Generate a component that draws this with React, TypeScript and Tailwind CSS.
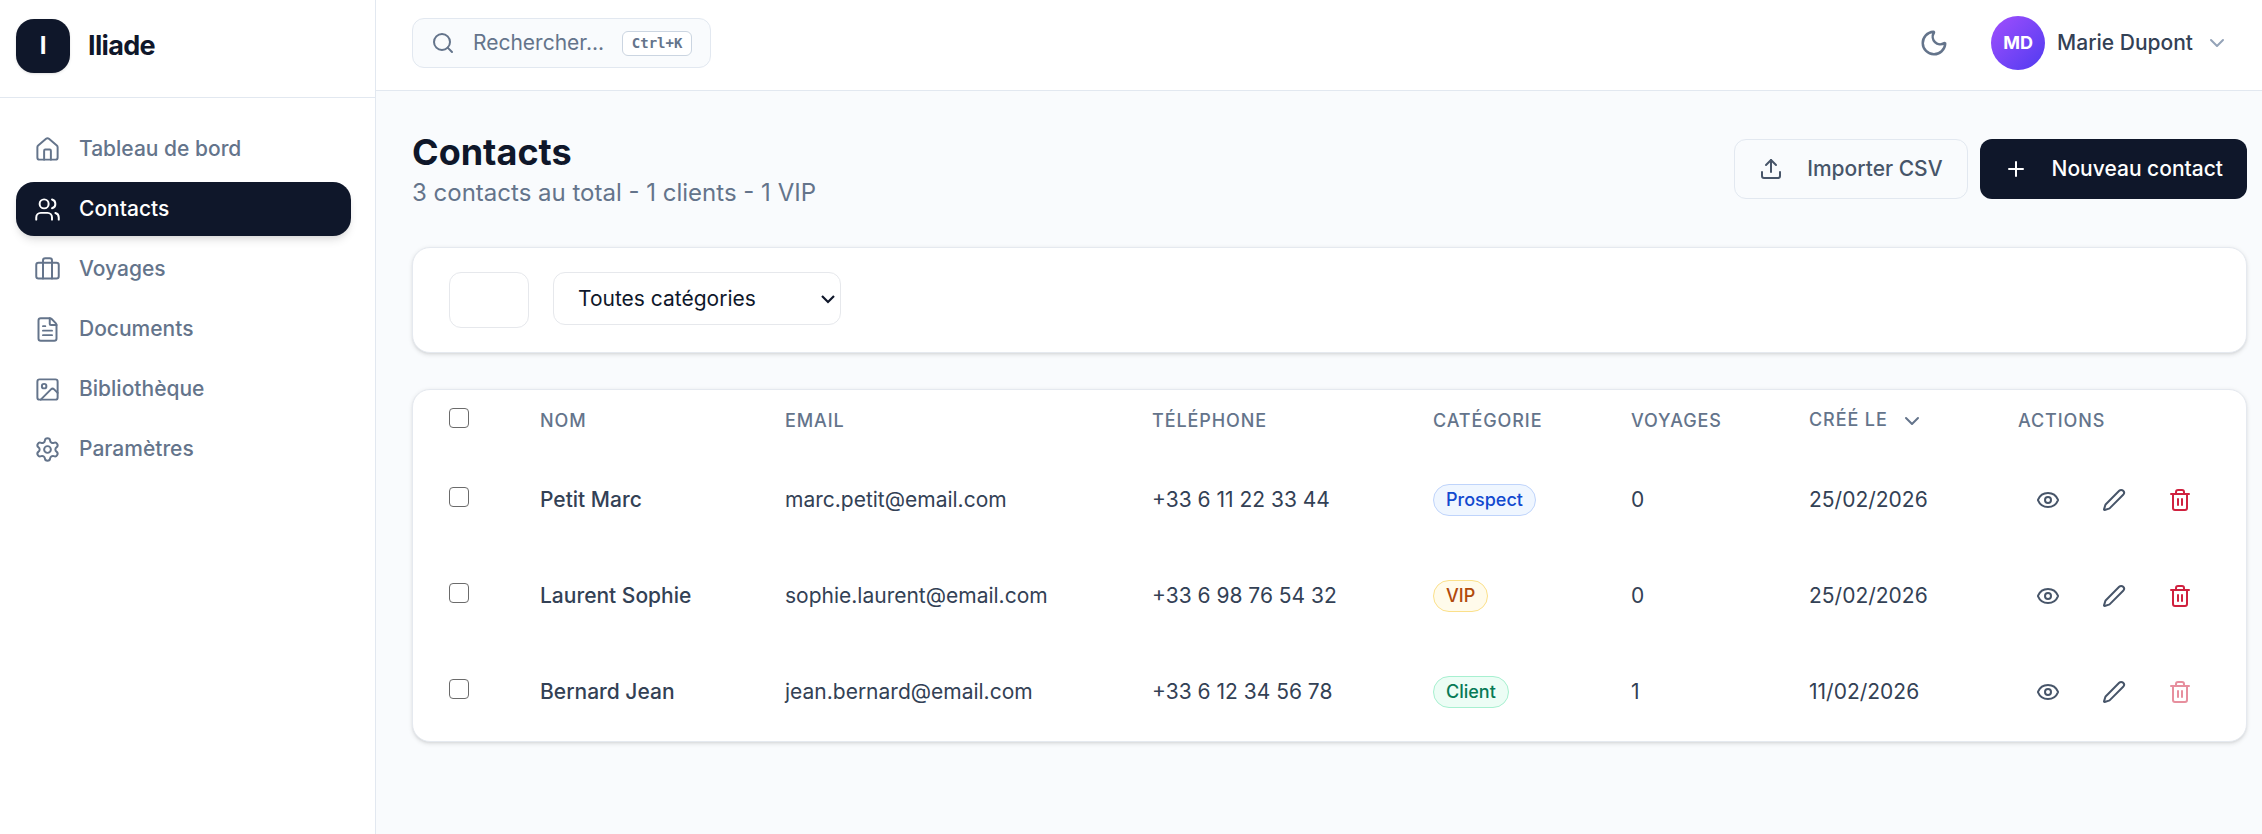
import {
  ChevronDown,
  Eye,
  FileText,
  House,
  Image,
  Moon,
  Pen,
  Plus,
  Search,
  Settings,
  Trash2,
  Upload,
  Users,
} from "lucide-react";
import type { LucideIcon } from "lucide-react";
import clsx from "clsx";

type NavItem = { label: string; icon: LucideIcon | typeof SuitcaseIcon; active?: boolean };

type Contact = {
  name: string;
  email: string;
  phone: string;
  category: "Prospect" | "VIP" | "Client";
  trips: number;
  created: string;
  locked?: boolean;
};

const SuitcaseIcon = ({ className }: { className?: string; strokeWidth?: number }) => (
  <svg className={className} viewBox="0 0 24 24" fill="none" stroke="currentColor" strokeWidth={1.75} strokeLinecap="round" strokeLinejoin="round">
    <rect x="2" y="6" width="20" height="14" rx="2" />
    <path d="M16 20V4a2 2 0 0 0-2-2h-4a2 2 0 0 0-2 2v16" />
  </svg>
);

const navItems: NavItem[] = [
  { label: "Tableau de bord", icon: House },
  { label: "Contacts", icon: Users, active: true },
  { label: "Voyages", icon: SuitcaseIcon },
  { label: "Documents", icon: FileText },
  { label: "Bibliothèque", icon: Image },
  { label: "Paramètres", icon: Settings },
];

const contacts: Contact[] = [
  { name: "Petit Marc", email: "marc.petit@email.com", phone: "+33 6 11 22 33 44", category: "Prospect", trips: 0, created: "25/02/2026" },
  { name: "Laurent Sophie", email: "sophie.laurent@email.com", phone: "+33 6 98 76 54 32", category: "VIP", trips: 0, created: "25/02/2026" },
  { name: "Bernard Jean", email: "jean.bernard@email.com", phone: "+33 6 12 34 56 78", category: "Client", trips: 1, created: "11/02/2026", locked: true },
];

const badgeStyles = {
  Prospect: "bg-[#eff6ff] border-[#bfd4fb] text-[#1249cf]",
  VIP: "bg-[#fffbeb] border-[#fbe08a] text-[#b14a0b]",
  Client: "bg-[#ecfdf5] border-[#a7f0d0] text-[#077a56]",
};

const columns = "grid grid-cols-[91px_245px_367px_281px_198px_178px_209px_1fr] items-center *:pl-9";

const cardShadow = "shadow-[0_1.5px_4.5px_rgba(0,0,0,0.1),0_1.5px_3px_-1.5px_rgba(0,0,0,0.1)]";

const Checkbox = () => (
  <input type="checkbox" className="block size-5 appearance-none rounded-[4px] border border-[#6b6b6b] bg-white" />
);

const Sidebar = () => (
  <aside className="flex w-94 shrink-0 flex-col border-r border-[#e2e8f0] bg-white">
    <div className="flex h-[98px] items-center gap-[18px] border-b border-[#e2e8f0] px-4 pb-[5px]">
      <div className="flex size-[54px] items-center justify-center rounded-[18px] bg-[#0f172a] text-2xl font-bold text-white shadow-sm">I</div>
      <span className="text-[27px] font-bold tracking-[-0.025em] text-[#0f172a]">Iliade</span>
    </div>
    <nav className="flex flex-col gap-1.5 pt-6 pr-6 pl-4">
      {navItems.map(({ label, icon: Icon, active }) => (
        <a
          key={label}
          className={clsx(
            "flex h-[54px] items-center gap-[18px] rounded-[18px] pl-[18px] text-[21px] font-medium",
            active
              ? "bg-[#0f172a] text-white shadow-[0_6px_9px_-1.5px_rgba(0,0,0,0.1),0_3px_6px_-3px_rgba(0,0,0,0.1)]"
              : "text-[#64748b]",
          )}
        >
          <Icon className="size-[27px]" strokeWidth={1.75} />
          <span>{label}</span>
        </a>
      ))}
    </nav>
  </aside>
);

const Header = () => (
  <header className="flex h-[91px] shrink-0 items-center justify-between border-b border-[#e2e8f0] bg-white pr-[33px] pb-1 pl-9">
    <div className="flex h-[50px] w-[299px] items-center rounded-xl border border-[#e2e8f0] bg-[#f9fbfd] pl-[18px] text-[#64748b]">
      <Search className="size-6" strokeWidth={2} />
      <span className="ml-[18px] text-[21px]">Rechercher...</span>
      <kbd className="ml-[18px] flex h-[25px] w-[70px] items-center justify-center rounded-md border border-[#cbd5e1] bg-white font-['DejaVu_Sans_Mono',monospace] text-[14px] font-bold">
        Ctrl+K
      </kbd>
    </div>
    <div className="flex items-center">
      <Moon className="size-[30px] text-[#64748b]" strokeWidth={2} />
      <div className="ml-[42px] flex size-[54px] items-center justify-center rounded-full bg-linear-to-br from-[#a14dfd] to-[#4f39f0] text-lg font-bold text-white">MD</div>
      <span className="ml-3 text-[21px] font-medium text-[#334155]">Marie Dupont</span>
      <ChevronDown className="ml-3 size-6 text-[#94a3b8]" />
    </div>
  </header>
);

const Filters = () => (
  <section className={clsx("mt-12 flex h-[106px] items-start gap-6 rounded-[18px] border border-[#e5e9ef] bg-white px-9 pt-6", cardShadow)}>
    <div className="h-14 w-20 rounded-xl border border-[#e6e8ec]" />
    <button className="flex h-[53px] w-72 items-center justify-between rounded-xl border border-[#e6e8ec] pr-1 pl-6 text-[21px] text-[#0f172a]">
      Toutes catégories
      <svg className="h-2.5 w-4" viewBox="0 0 16 10" fill="none" stroke="currentColor" strokeWidth="2.2">
        <path d="M2 2l6 6 6-6" />
      </svg>
    </button>
  </section>
);

const ContactRow = ({ contact }: { contact: Contact }) => (
  <div className={clsx(columns, "h-24 text-[21px] text-[#334155]")}>
    <div className="pb-1.5">
      <Checkbox />
    </div>
    <div className="font-medium">{contact.name}</div>
    <div>{contact.email}</div>
    <div>{contact.phone}</div>
    <div className="flex">
      <span className={clsx("flex h-8 items-center rounded-full border px-3 text-lg font-medium", badgeStyles[contact.category])}>
        {contact.category}
      </span>
    </div>
    <div>{contact.trips}</div>
    <div>{contact.created}</div>
    <div className="flex gap-1.5 text-[#475569]">
      <button className="flex h-12 w-15 items-center justify-center">
        <Eye className="size-6" />
      </button>
      <button className="flex h-12 w-15 items-center justify-center">
        <Pen className="size-6" />
      </button>
      <button className={clsx("flex h-12 w-15 items-center justify-center text-[#d0213f]", contact.locked && "opacity-50")}>
        <Trash2 className="size-6" />
      </button>
    </div>
  </div>
);

const ContactsTable = () => (
  <section className={clsx("mt-9 h-[353px] rounded-[18px] border border-[#e5e9ef] bg-white", cardShadow)}>
    <div className={clsx(columns, "h-[62px] text-lg font-medium tracking-[0.05em] text-[#64748b] uppercase")}>
      <div className="pb-1.5">
        <Checkbox />
      </div>
      <div>Nom</div>
      <div>Email</div>
      <div>Téléphone</div>
      <div>Catégorie</div>
      <div>Voyages</div>
      <div className="flex items-center gap-3">
        <span className="pb-0.5">Créé le</span>
        <ChevronDown className="size-6" />
      </div>
      <div>Actions</div>
    </div>
    {contacts.map((contact) => (
      <ContactRow key={contact.email} contact={contact} />
    ))}
  </section>
);

const App = () => (
  <div className="flex h-screen overflow-hidden bg-[#f9fbfd] font-['Inter',sans-serif]">
    <Sidebar />
    <div className="flex flex-1 flex-col">
      <Header />
      <main className="flex-1 pt-9 pr-[15px] pl-9">
        <div className="flex h-[72px] items-start justify-between">
          <div>
            <h1 className="mt-0.5 text-4xl leading-[46px] font-bold text-[#0f172a]">Contacts</h1>
            <p className="text-2xl leading-9 text-[#64748b]">3 contacts au total - 1 clients - 1 VIP</p>
          </div>
          <div className="mt-3 flex gap-3 text-[21px] font-medium">
            <button className="flex h-15 items-center gap-6 rounded-xl border border-[#e2e8f0] px-6 text-[#475569]">
              <Upload className="size-6" />
              Importer CSV
            </button>
            <button className="flex h-15 items-center gap-6 rounded-xl bg-[#0f172a] px-6 text-white">
              <Plus className="size-6" />
              Nouveau contact
            </button>
          </div>
        </div>
        <Filters />
        <ContactsTable />
      </main>
    </div>
  </div>
);

export default App;
